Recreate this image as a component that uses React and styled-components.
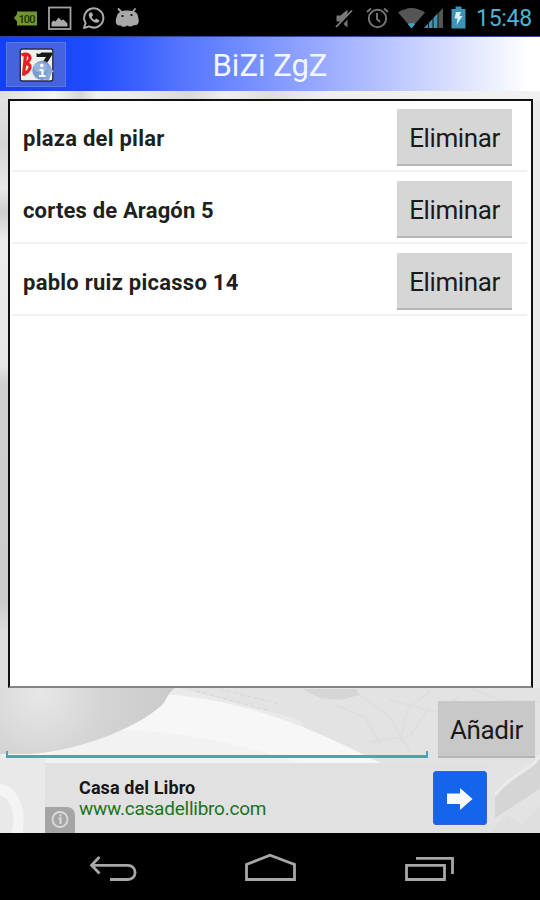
import React from "react";
import styled, { createGlobalStyle } from "styled-components";

const GlobalStyle = createGlobalStyle`
  body {
    margin: 0;
    background: #000;
  }
  * {
    box-sizing: border-box;
  }
`;

const Screen = styled.div`
  width: 540px;
  height: 900px;
  display: flex;
  flex-direction: column;
  overflow: hidden;
  background: #000;
  font-family: Roboto, "Liberation Sans", sans-serif;
`;

const StatusBar = styled.div`
  height: 36px;
  flex: none;
  display: flex;
  justify-content: space-between;
`;

const Clock = styled.div`
  width: 69px;
  padding-left: 5px;
  font-size: 23px;
  line-height: 38px;
  letter-spacing: -0.3px;
  color: #4fb3d3;
  white-space: nowrap;
`;

const StatusGroup = styled.div`
  display: flex;
`;

const Header = styled.header`
  height: 55px;
  flex: none;
  display: grid;
  grid-template-columns: 60px 1fr 60px;
  align-items: center;
  padding: 0 6px;
  border-top: 1px solid #33479c;
  background: linear-gradient(90deg, #1440f4 0, #1f4bff 90px, #5375ff 180px, #9cadff 330px, #cdd6ff 430px, #fff 530px);
`;

const IconButton = styled.button`
  width: 60px;
  height: 45px;
  padding: 0;
  border: 1px solid #5b77e6;
  background: #4463dd;
`;

const Title = styled.h1`
  margin: 0;
  padding-top: 3px;
  font-size: 31px;
  font-weight: 400;
  line-height: 51px;
  text-align: center;
  color: #f1f5ff;
  white-space: nowrap;
`;

const Body = styled.main`
  height: 742px;
  flex: none;
  position: relative;
  display: flex;
  flex-direction: column;
  isolation: isolate;
  background: #e8e8e8;
`;

const Backdrop = styled.svg`
  position: absolute;
  inset: 0;
  z-index: -1;
`;

const List = styled.ul`
  height: 589px;
  margin: 8px 7px 0 8px;
  padding: 0 4px 0 2px;
  list-style: none;
  background: #fff;
  border: 2px solid #111;
  border-bottom-color: #858585;
`;

const Row = styled.li`
  height: 72px;
  display: flex;
  align-items: flex-start;
  justify-content: space-between;
  padding: 9px 15px 0 11px;
  border-bottom: 2px solid #f1f1f1;

  &:first-child {
    height: 71px;
    padding-top: 8px;
  }
`;

const Place = styled.span`
  font-size: 22px;
  font-weight: 700;
  line-height: 60px;
  letter-spacing: ${(p) => p.$spacing || 0}px;
  color: #1f1f1f;
  white-space: nowrap;
`;

const Button = styled.button`
  width: ${(p) => p.$width}px;
  height: 57px;
  padding: 2px 0 0;
  border: none;
  border-bottom: 2px solid #b5b5b5;
  background: ${(p) => p.$color || "#d6d6d6"};
  font-family: inherit;
  font-size: 26px;
  letter-spacing: ${(p) => p.$spacing || 0}px;
  color: #1a1a1a;
  white-space: nowrap;
`;

const Form = styled.div`
  height: 75px;
  display: flex;
  justify-content: space-between;
  padding: 13px 5px 0 6px;
`;

const Field = styled.div`
  width: 422px;
  height: 7px;
  margin-top: 50px;
  border: 2px solid #45a5bd;
  border-bottom-width: 3px;
  border-top: none;
`;

const Ad = styled.div`
  height: 70px;
  display: flex;
`;

const AdPanel = styled.div`
  width: 442px;
  display: flex;
  background: #e1e1e1;
`;

const AdThumb = styled.svg`
  flex: none;
`;

const AdInfo = styled.div`
  width: 30px;
  height: 26px;
  margin-top: auto;
  padding: 0 0 0 1px;
  border-radius: 0 8px 0 0;
  background: #a5a5a5;
`;

const AdText = styled.div`
  flex: 1;
  padding: 13px 0 0 4px;
  white-space: nowrap;
`;

const AdTitle = styled.div`
  font-size: 18px;
  font-weight: 700;
  line-height: 23px;
  letter-spacing: 0.1px;
  color: #161616;
`;

const AdLink = styled.div`
  font-size: 19px;
  line-height: 19px;
  letter-spacing: -0.24px;
  color: #1a741d;
`;

const ArrowButton = styled.button`
  width: 54px;
  height: 54px;
  margin: 8px 0 0;
  padding: 0;
  border: 1px solid #3a62c8;
  border-radius: 3px;
  background: #1465ec;
`;

const NavBar = styled.nav`
  height: 67px;
  display: flex;
`;

const NotificationIcons = () => (
  <svg width="150" height="36">
    <path d="M14 18l3-4V11.500h20v14H17v-4z" fill="#71962f" />
    <text x="18.500" y="22.500" fontSize="11" textLength="17" fontFamily="Roboto, sans-serif" fontWeight="500" fill="#20300b">
      100
    </text>
    <rect x="49" y="7.500" width="21.500" height="21.500" fill="none" stroke="#a2a2a2" strokeWidth="1.800" />
    <path d="M51.500 26.500v-4l2-2 2 1 3-4 3 3 2-1 4 4v3z" fill="#aaa" />
    <path d="M84 28l1.600-5a9.600 9.600 0 1 1 3.600 3.400z" fill="none" stroke="#aaa" strokeWidth="2" strokeLinejoin="round" />
    <path d="M90 12.500c-3 2 0 7 3 9s6 1.500 6.500-1l-3.300-2-1.600 1.500c-1.500-.5-2.800-2-3-3l1.400-1.500-1-3z" fill="#b0b0b0" />
    <path d="M118.500 9l4 4M135 9l-3 4" stroke="#aaa" strokeWidth="1.800" strokeLinecap="round" />
    <path d="M117 16c1-4 5-5.500 9.500-5.500S137 11 138 16l.8 5c0 3.500-3 5-5 4-2 2-5 1.500-6.500.5-2.500 1.800-5 1.500-6.500 0-3 .5-5-1-5-4 0-2 .2-3.500 1.200-5.500z" fill="#a8a8a8" />
    <circle cx="122.500" cy="16" r="1.100" fill="#000" />
    <circle cx="131.500" cy="15" r="1.100" fill="#000" />
  </svg>
);

const SystemIcons = () => (
  <svg width="142" height="36">
    <g transform="translate(-329 0)">
      <path d="M336.500 15.500h4l7-6v18l-7-6h-4z" fill="#777" />
      <path d="M337.500 27.500L353 11" stroke="#000" strokeWidth="4" />
      <path d="M336 27L352 10.500" stroke="#888" strokeWidth="1.700" />
      <circle cx="377.500" cy="18.500" r="8.700" fill="none" stroke="#777" strokeWidth="1.900" />
      <path d="M377 13v6l3 3M367 12l4-3.500M388 12l-4-3.500" fill="none" stroke="#777" strokeWidth="1.900" />
      <path d="M398 12.500q13.500-9 27 0L411.500 28z" fill="#555" />
      <path d="M407.800 24q3.700-2 7.400 0l-3.700 4.500z" fill="#3ba5c5" />
      <path d="M424 28l19-20v20z" fill="#555" />
      <path d="M424 28l14-15v15z" fill="#3c93b0" />
      <path d="M428.500 21v7M433 17v11M438 12v16" stroke="#111" strokeWidth="1" />
      <path d="M451.500 9h4V6.500h6V9h4v19.500h-14z" fill="#3d93b3" />
      <path d="M456 12h5l-1.500 4h3l-6 9 1-6.500h-3z" fill="#d8eff5" />
    </g>
  </svg>
);

const BiziLogo = () => (
  <svg width="58" height="43" viewBox="7 42.500 58 43">
    <rect x="20.300" y="48.500" width="32.500" height="32" rx="2" fill="#f0f0ea" stroke="#292c48" strokeWidth="1.400" />
    <path d="M25.500 54L23.500 75M21.500 54.500c8-3 12 3 4 9 7-1 6 7-3 10.500" fill="none" stroke="#e32222" strokeWidth="3.200" />
    <path d="M36.500 52.500q3 2 5-.5h10.500v2.500l-5 8h-5l4-6h-9.500z" fill="#171717" />
    <circle cx="42" cy="70" r="9.700" fill="#7b9dd6" />
    <ellipse cx="40.500" cy="67" rx="7" ry="5" fill="#a8c0e5" opacity=".6" />
    <path d="M49 65l5 6-3 2-2 7-4-1z" fill="#8da9d4" />
    <circle cx="41.800" cy="65" r="1.800" fill="#fff" />
    <path d="M39.500 69.500h3v6M39 75.500h6.500" fill="none" stroke="#fff" strokeWidth="2.200" />
  </svg>
);

// Faded city photo behind the list and the form
const Photo = () => (
  <Backdrop width="540" height="742" viewBox="0 91 540 742">
    <defs>
      <radialGradient id="wheel" gradientUnits="userSpaceOnUse" cx="40" cy="695" r="130">
        <stop offset="0" stopColor="#e7e7e7" />
        <stop offset=".5" stopColor="#d4d4d4" />
        <stop offset="1" stopColor="#cbcbcb" />
      </radialGradient>
      <linearGradient id="side" x2="0" y2="1">
        <stop offset="0" stopColor="#e3e3e3" />
        <stop offset=".08" stopColor="#d6d6d6" />
        <stop offset=".15" stopColor="#e8e8e8" />
        <stop offset=".19" stopColor="#cfcfcf" />
        <stop offset=".24" stopColor="#ececec" />
        <stop offset=".45" stopColor="#e6e6e6" />
        <stop offset=".48" stopColor="#cfcfcf" />
        <stop offset=".85" stopColor="#cccccc" />
        <stop offset=".9" stopColor="#dedede" />
        <stop offset="1" stopColor="#dedede" />
      </linearGradient>
      <linearGradient id="sky">
        <stop offset="0" stopColor="#dedede" />
        <stop offset=".1" stopColor="#f5f5f5" />
        <stop offset=".15" stopColor="#d6d6d6" />
        <stop offset=".18" stopColor="#f1f1f1" />
        <stop offset=".27" stopColor="#e9e9e9" />
        <stop offset=".35" stopColor="#d8dad6" />
        <stop offset=".42" stopColor="#f0f0ee" />
        <stop offset=".5" stopColor="#dedfdb" />
        <stop offset=".6" stopColor="#efefed" />
        <stop offset="1" stopColor="#f1f1f1" />
      </linearGradient>
    </defs>
    <rect y="91" width="540" height="742" fill="#eaeaea" />
    <rect y="91" width="540" height="10" fill="url(#sky)" />
    <rect y="99" width="9" height="592" fill="url(#side)" />
    <path d="M180 688H540V833H380L300 720z" fill="#e3e3e3" />
    <path d="M165 694c60 5 120 20 205 64l14 6H0v-8z" fill="#f7f7f7" />
    <path d="M100 732q80-8 200 31H30z" fill="#f0f0f0" opacity=".8" />
    <path d="M0 688H175c-8 5-8 13-14 18-30 26-90 46-132 48H0z" fill="url(#wheel)" />
    <path d="M302 689h54l4 6-20 5-20-2z" fill="#d6d6d6" />
    <path d="M360 695l30 22 20 35M390 700l46 12 24-16M370 742l40-6 20-30M430 691l-22 18-8 32M335 705l30 12 16 28M470 688l30 12 40 2" fill="none" stroke="#dedede" strokeWidth="2" />
    <path d="M196 691l74 20M220 689l60 15" stroke="#dadada" strokeWidth="1.500" strokeDasharray="4 3" />
    <path d="M495 797c20-25 40-25 45-44v35c-17 13-29 19-45 30z" fill="#d5d5d5" />
    <path d="M495 795c20-25 36-23 45-40" fill="none" stroke="#ebebeb" strokeWidth="3" />
    <path d="M488 833l20-18 14 10 18-21v29z" fill="#dfdfdf" />
    <path d="M0 756h45v77H0z" fill="#e9e9e9" />
  </Backdrop>
);

const places = [
  { name: "plaza del pilar", spacing: 0.25 },
  { name: "cortes de Aragón 5", spacing: 0.16 },
  { name: "pablo ruiz picasso 14", spacing: 0.25 },
];

const App = () => {
  return (
    <>
      <GlobalStyle />
      <Screen>
        <StatusBar>
          <NotificationIcons />
          <StatusGroup>
            <SystemIcons />
            <Clock>15:48</Clock>
          </StatusGroup>
        </StatusBar>
        <Header>
          <IconButton aria-label="Info">
            <BiziLogo />
          </IconButton>
          <Title>BiZi ZgZ</Title>
        </Header>
        <Body>
          <Photo />
          <List>
            {places.map((place) => (
              <Row key={place.name}>
                <Place $spacing={place.spacing}>{place.name}</Place>
                <Button $width={115} $spacing={-0.4}>
                  Eliminar
                </Button>
              </Row>
            ))}
          </List>
          <Form>
            <Field />
            <Button $width={97} $color="#c8c8c8" $spacing={-0.4}>
              Añadir
            </Button>
          </Form>
          <Ad>
            <AdThumb width="45" height="70">
              <path d="M0 21c18 1 28 28 22 50H11C18 49 9 35 0 32z" fill="#f4f4f4" />
            </AdThumb>
            <AdPanel>
              <AdInfo>
                <svg width="28" height="26">
                  <circle cx="14" cy="12.500" r="7.500" fill="none" stroke="#dcdcdc" strokeWidth="1.800" />
                  <path d="M12.500 11.500h2v5.500M14.500 7.500v2" fill="none" stroke="#dcdcdc" strokeWidth="2" />
                </svg>
              </AdInfo>
              <AdText>
                <AdTitle>Casa del Libro</AdTitle>
                <AdLink>www.casadellibro.com</AdLink>
              </AdText>
              <ArrowButton aria-label="Abrir">
                <svg width="52" height="52">
                  <path d="M13 21.500h13v-5.500L38.500 27 26 38v-6H13z" fill="#f7faff" />
                </svg>
              </ArrowButton>
            </AdPanel>
          </Ad>
        </Body>
        <NavBar>
          <svg width="540" height="67" viewBox="0 833 540 67" fill="none" stroke="#a7a7a7" strokeWidth="2.800">
            <path d="M99.500 857l-8 8.200 8 8.300M92 865.300h36a7 7 0 0 1 0 14.200h-18" />
            <path d="M246.500 864.500v15h48v-15L270 855.300z" />
            <path d="M406.500 865.300h38v14.200h-38zM416 858.300h36.500V874" />
          </svg>
        </NavBar>
      </Screen>
    </>
  );
};

export default App;
